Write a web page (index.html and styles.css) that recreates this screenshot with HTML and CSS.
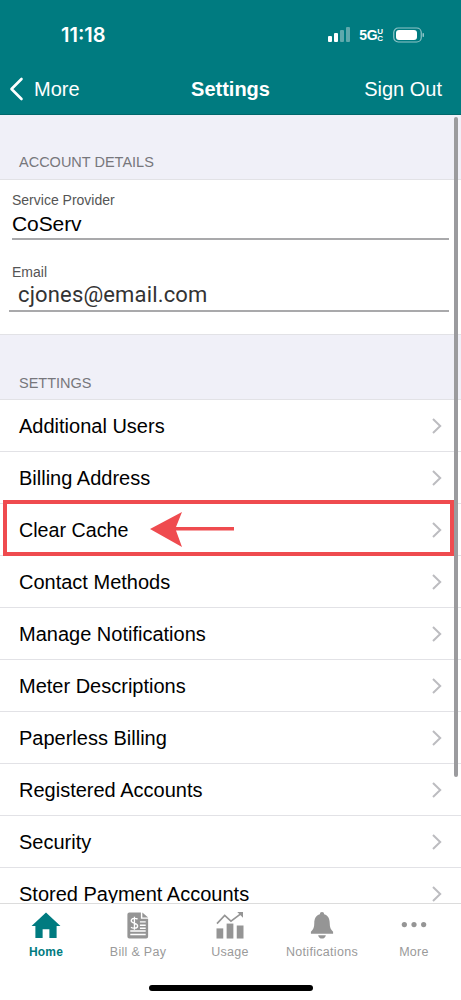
FILE: index.html
```html
<!DOCTYPE html>
<html lang="en">
<head>
<meta charset="utf-8">
<title>Settings</title>
<link rel="stylesheet" href="styles.css">
</head>
<body>
<div class="app">
  <header class="top">
    <div class="status">
      <span class="time">11:18</span>
      <div class="status-right">
        <svg class="signal" width="24" height="16" viewBox="0 0 24 16"><rect x="0" y="9" width="4" height="6" rx="1" fill="#fff"/><rect x="6" y="6" width="4" height="9" rx="1" fill="#fff"/><rect x="12" y="3" width="4" height="12" rx="1" fill="#5fa9ac"/><rect x="18" y="0" width="4" height="15" rx="1" fill="#5fa9ac"/></svg>
        <span class="net">5G</span><span class="uc"><span>U</span><span>C</span></span>
        <svg class="battery" width="32" height="16" viewBox="0 0 32 16"><rect x="0.75" y="1" width="27.5" height="14" rx="4.5" fill="none" stroke="#8fc5c7" stroke-width="1.2"/><rect x="3" y="3" width="21" height="10" rx="3" fill="#fff"/><rect x="29.5" y="6" width="1.5" height="4" rx="0.7" fill="#8fc5c7"/></svg>
      </div>
    </div>
    <nav class="nav">
      <div class="back">
        <svg width="16" height="26" viewBox="0 0 16 26"><path d="M13.5 3 L3.5 13 L13.5 23" fill="none" stroke="#fff" stroke-width="2.6" stroke-linecap="round" stroke-linejoin="round"/></svg>
        <span>More</span>
      </div>
      <div class="title">Settings</div>
      <div class="signout">Sign Out</div>
    </nav>
  </header>

  <main class="content">
    <div class="scrollbar"></div>
    <div class="section-head first">ACCOUNT DETAILS</div>
    <section class="form">
      <div class="field provider">
        <div class="label">Service Provider</div>
        <div class="value">CoServ</div>
      </div>
      <div class="field email">
        <div class="label">Email</div>
        <div class="value">cjones@email.com</div>
      </div>
    </section>
    <div class="section-head second">SETTINGS</div>
    <ul class="list">
      <li class="row"><span>Additional Users</span><svg class="chev" width="10" height="16" viewBox="0 0 10 16"><path d="M1 1 L8.2 8 L1 15"/></svg></li>
      <li class="row"><span>Billing Address</span><svg class="chev" width="10" height="16" viewBox="0 0 10 16"><path d="M1 1 L8.2 8 L1 15"/></svg></li>
      <li class="row marked"><span>Clear Cache</span><svg class="chev" width="10" height="16" viewBox="0 0 10 16"><path d="M1 1 L8.2 8 L1 15"/></svg>
        <svg class="arrow" width="85" height="36" viewBox="0 0 85 36"><path d="M0 17 L32 0 L26 15 L84 15 L84 18.5 L26 18.5 L32 35 Z" fill="#ef4b4f"/></svg>
      </li>
      <li class="row"><span>Contact Methods</span><svg class="chev" width="10" height="16" viewBox="0 0 10 16"><path d="M1 1 L8.2 8 L1 15"/></svg></li>
      <li class="row"><span>Manage Notifications</span><svg class="chev" width="10" height="16" viewBox="0 0 10 16"><path d="M1 1 L8.2 8 L1 15"/></svg></li>
      <li class="row"><span>Meter Descriptions</span><svg class="chev" width="10" height="16" viewBox="0 0 10 16"><path d="M1 1 L8.2 8 L1 15"/></svg></li>
      <li class="row"><span>Paperless Billing</span><svg class="chev" width="10" height="16" viewBox="0 0 10 16"><path d="M1 1 L8.2 8 L1 15"/></svg></li>
      <li class="row"><span>Registered Accounts</span><svg class="chev" width="10" height="16" viewBox="0 0 10 16"><path d="M1 1 L8.2 8 L1 15"/></svg></li>
      <li class="row"><span>Security</span><svg class="chev" width="10" height="16" viewBox="0 0 10 16"><path d="M1 1 L8.2 8 L1 15"/></svg></li>
      <li class="row"><span>Stored Payment Accounts</span><svg class="chev" width="10" height="16" viewBox="0 0 10 16"><path d="M1 1 L8.2 8 L1 15"/></svg></li>
    </ul>
  </main>

  <footer class="tabbar">
    <div class="tabs">
      <div class="tab active">
        <svg width="32" height="28" viewBox="0 0 32 28"><path fill="#007b80" d="M16 0.5 L31 14.5 L27 14.5 L27 27 L19.5 27 L19.5 18 L12.5 18 L12.5 27 L5 27 L5 14.5 L1 14.5 Z"/></svg>
        <span>Home</span>
      </div>
      <div class="tab">
        <svg width="22" height="28" viewBox="0 0 22 28"><path fill="#959595" fill-rule="evenodd" d="M2 0.5 H14 V7 H21.5 V25.5 a2 2 0 0 1 -2 2 H2 a2 2 0 0 1 -2 -2 V2.5 a2 2 0 0 1 2 -2 Z M3 19 V20.5 H19 V19 Z M3 22.5 V24 H19 V22.5 Z M13 13 V14.5 H19 V13 Z M13 9.5 V11 H19 V9.5 Z M13 16 V17.5 H19 V16 Z"/><path fill="#959595" d="M15.5 0.5 L21.5 5.8 H15.5 Z"/><path fill="none" stroke="#fff" stroke-width="1.4" d="M10.5 7.5 C9.5 6.2 4 6 4 9.2 C4 12.5 10.6 11.2 10.6 14.4 C10.6 17.4 5 17.2 3.8 15.6 M7.3 4.8 V18.4"/></svg>
        <span>Bill &amp; Pay</span>
      </div>
      <div class="tab">
        <svg width="28" height="28" viewBox="0 0 28 28"><g fill="#959595"><rect x="0" y="17" width="7" height="10.5"/><rect x="10.5" y="12" width="7" height="15.5"/><rect x="21" y="14" width="7" height="13.5"/></g><path fill="none" stroke="#959595" stroke-width="1.7" d="M0.5 12 L8.5 3.5 L15 9.5 L26.5 1"/><path fill="#959595" d="M21.5 0 H27.5 V6 Z"/></svg>
        <span>Usage</span>
      </div>
      <div class="tab">
        <svg width="24" height="28" viewBox="0 0 24 28"><path fill="#959595" d="M12 0 a2.2 2.2 0 0 1 2.2 2.4 C18.5 3.6 20 7.5 20 11.5 C20 16 21 18.5 23.5 20.5 V22.5 H0.5 V20.5 C3 18.5 4 16 4 11.5 C4 7.5 5.5 3.6 9.8 2.4 A2.2 2.2 0 0 1 12 0 Z M8 24 H16 C15.5 26.5 14 27.5 12 27.5 C10 27.5 8.5 26.5 8 24 Z"/></svg>
        <span>Notifications</span>
      </div>
      <div class="tab">
        <svg width="26" height="28" viewBox="0 0 26 28"><g fill="#959595"><circle cx="3" cy="13" r="2.7"/><circle cx="13" cy="13" r="2.7"/><circle cx="23" cy="13" r="2.7"/></g></svg>
        <span>More</span>
      </div>
    </div>
    <div class="home-indicator"></div>
  </footer>
</div>
</body>
</html>
```

FILE: styles.css
```css
* { box-sizing: border-box; }
html, body { margin: 0; padding: 0; }
body { font-family: "Liberation Sans", Arial, sans-serif; background: #fff; color: #000; }
.app { width: 461px; height: 1000px; display: flex; flex-direction: column; overflow: hidden; }

.top { height: 115px; flex: none; background: #007b80; color: #fff; border-bottom: 1px solid #00686c; }
.status { height: 66px; display: flex; justify-content: space-between; padding: 23px 0 0 61px; }
.time { font-family: Inter, "Liberation Sans", sans-serif; font-size: 20px; font-weight: 600; line-height: 24px; }
.status-right { display: flex; align-items: center; height: 24px; padding-right: 36px; }
.signal { margin-right: 7px; }
.net { font-size: 14px; font-weight: 700; letter-spacing: -0.3px; }
.uc { display: flex; flex-direction: column; font-size: 8px; font-weight: 700; line-height: 7px; margin-right: 10px; }
.nav { display: flex; align-items: center; height: 46px; position: relative; }
.back { display: flex; align-items: center; gap: 10px; padding-left: 8px; font-size: 20px; }
.title { position: absolute; left: 0; right: 0; text-align: center; font-size: 20px; font-weight: 700; pointer-events: none; }
.signout { margin-left: auto; padding-right: 19px; font-size: 20px; }

.content { flex: 1; min-height: 0; overflow: hidden; background: #f0f0f8; position: relative; }
.scrollbar { position: absolute; top: 2px; right: 3px; width: 4px; height: 660px; border-radius: 2px; background: #9b9b9e; z-index: 2; }
.section-head { color: #77777c; font-size: 14.5px; padding-left: 19px; line-height: 18px; border-bottom: 1px solid #e2e2e6; height: 65px; }
.section-head.first { padding-top: 38px; }
.section-head.second { padding-top: 39px; }

.form { background: #fff; height: 155px; padding-left: 9px; padding-right: 12px; border-bottom: 1px solid #e2e2e6; }
.field { padding-top: 12px; height: 60px; border-bottom: 2px solid #a9a9ab; }
.field + .field { margin-top: 12px; }
.provider { margin-left: 3px; }
.label { font-size: 14px; line-height: 17px; color: #555; }
.email .label { padding-left: 3px; }
.value { font-size: 21px; line-height: 28px; letter-spacing: -0.1px; margin-top: 1px; }
.email .value { margin-top: 0; padding-left: 9px; color: #333; font-family: Roboto, "Liberation Sans", sans-serif; font-size: 22px; letter-spacing: 0.15px; }

.list { list-style: none; margin: 0; padding: 0; background: #fff; }
.row { height: 52px; display: flex; align-items: center; justify-content: space-between; padding: 0 19px; font-size: 20px; border-bottom: 1px solid #e2e2e6; position: relative; }
.row > span { padding-top: 2px; }
.chev { fill: none; stroke: #bcbcc0; stroke-width: 2; flex: none; }
.marked { font-size: 19.7px; }
.marked::after { content: ""; position: absolute; left: 3px; right: 7px; top: -4px; bottom: -1px; border: 4px solid #ef4b4f; }
.arrow { position: absolute; left: 150px; top: 8px; }

.tabbar { height: 97px; flex: none; background: #fff; border-top: 1px solid #dcdcdc; position: relative; }
.tabs { display: grid; grid-template-columns: repeat(5, 92px); padding-top: 8px; }
.tab { display: flex; flex-direction: column; align-items: center; font-size: 12.5px; color: #9a9a9a; gap: 6px; letter-spacing: 0.3px; }
.tab svg { display: block; height: 27px; }
.tab.active { color: #007b80; font-weight: 700; font-size: 12px; letter-spacing: 0.2px; }
.home-indicator { position: absolute; left: 149px; top: 81px; width: 164px; height: 6px; border-radius: 3px; background: #000; }
```
